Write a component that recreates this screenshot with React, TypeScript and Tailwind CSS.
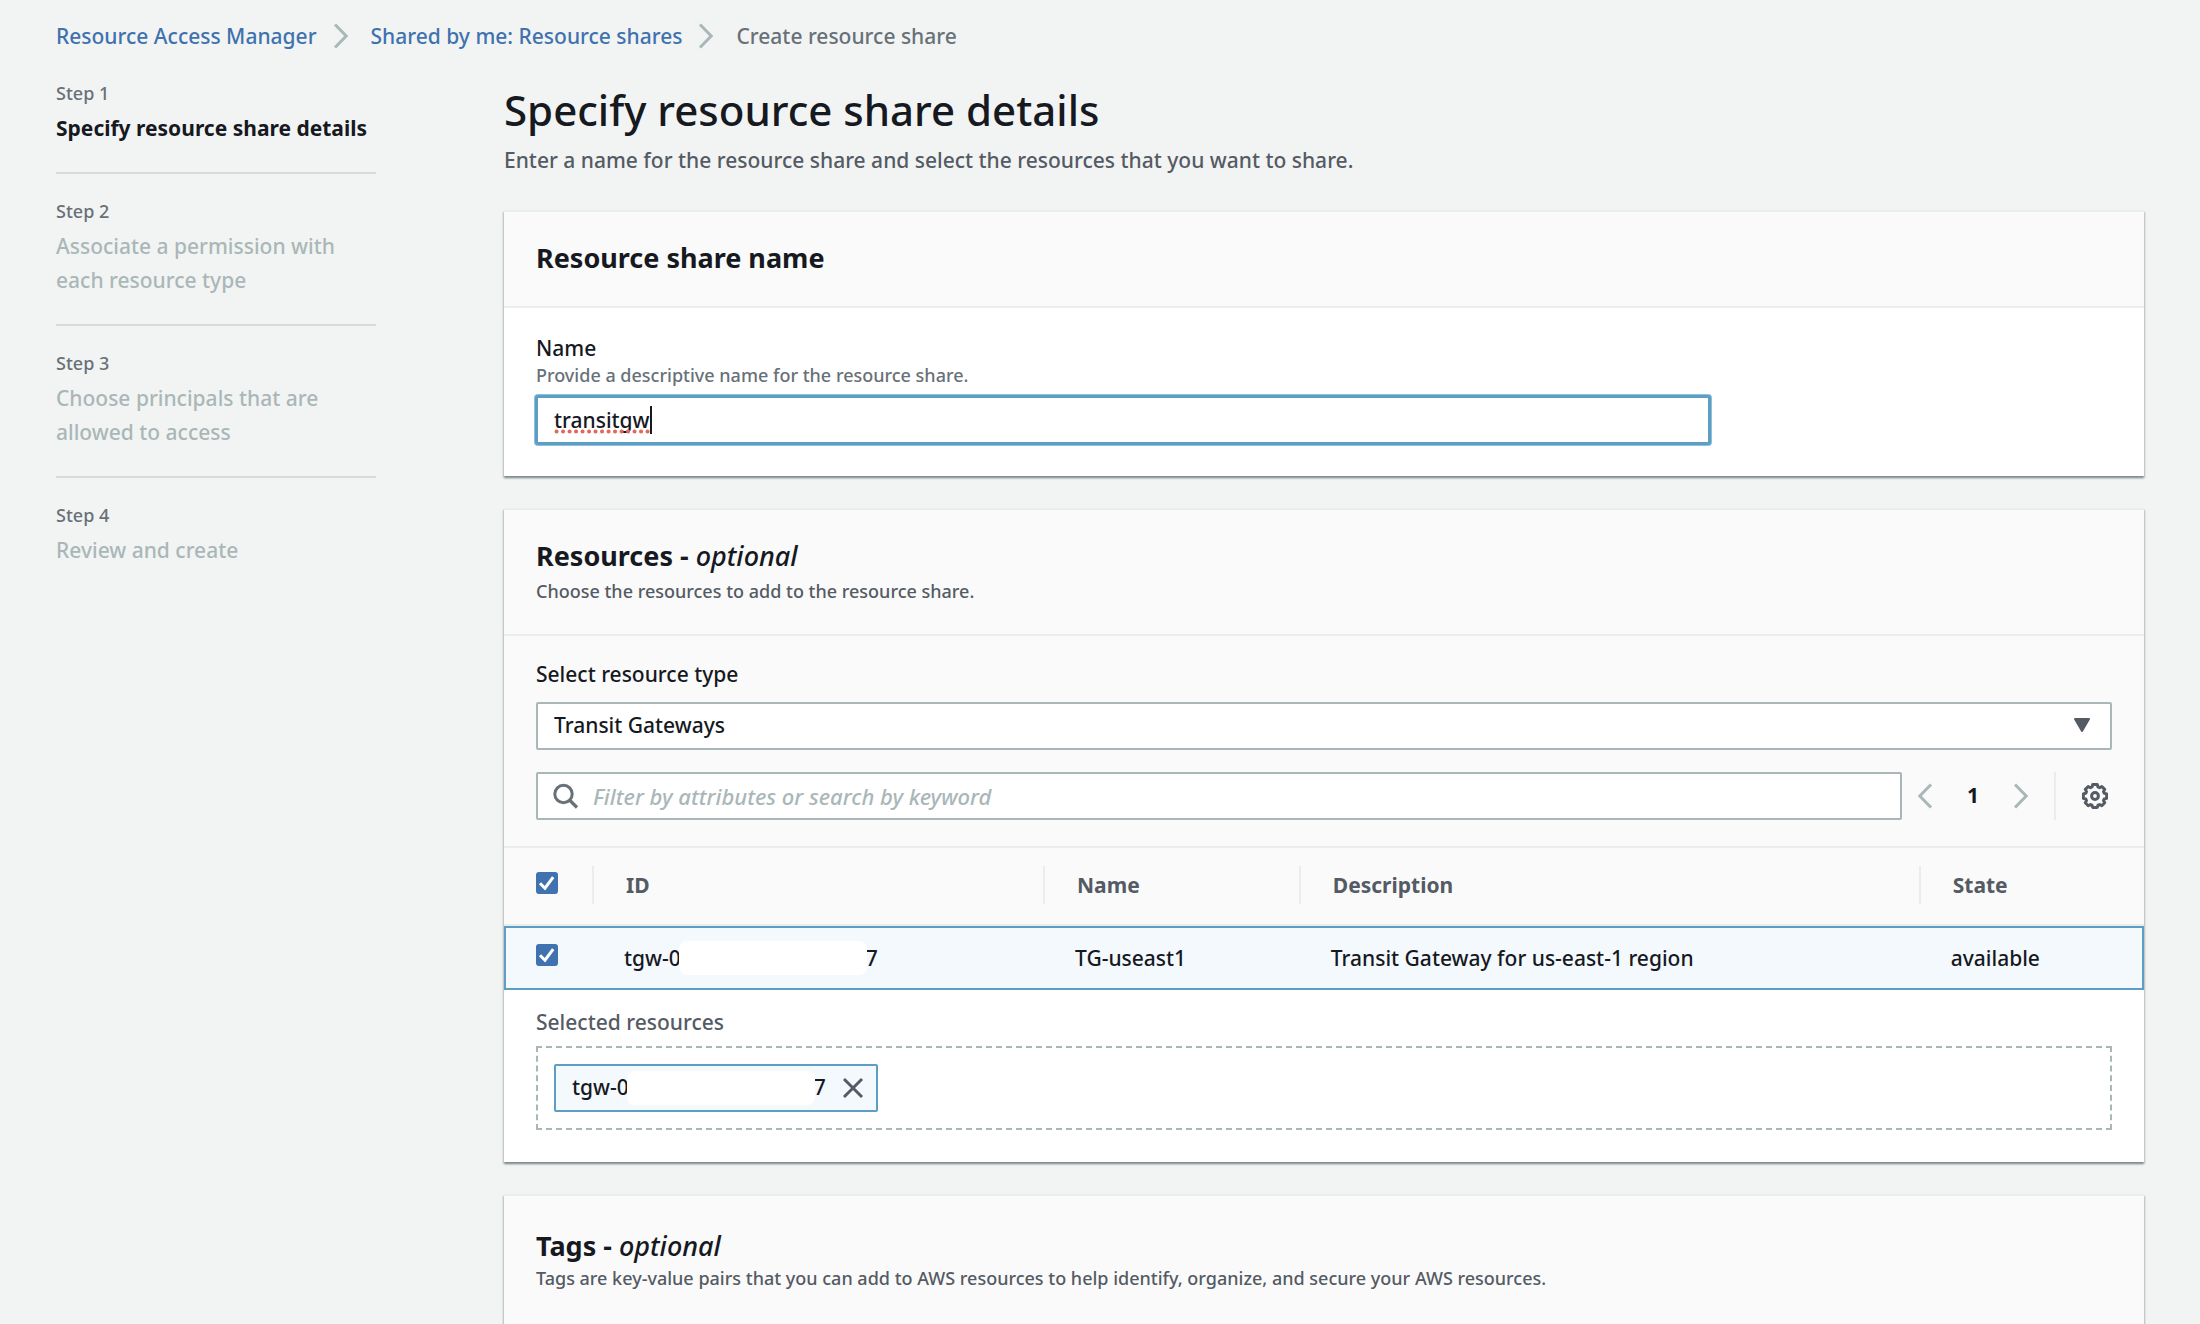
import { useState, type ReactNode } from "react"
import clsx from "clsx"

const steps = [
  "Specify resource share details",
  "Associate a permission with each resource type",
  "Choose principals that are allowed to access",
  "Review and create",
]

const gateways = [
  { id: ["tgw-0", "7"], name: "TG-useast1", description: "Transit Gateway for us-east-1 region", state: "available" },
]

function Chevron({ flip = false, className = "" }: { flip?: boolean; className?: string }) {
  return (
    <svg viewBox="0 0 16 26" className={clsx("h-[26px] w-4 shrink-0", flip && "rotate-180", className)} aria-hidden="true">
      <path d="M2 1.5 13.2 13 2 24.5" fill="none" stroke="#aab7b8" strokeWidth="3" />
    </svg>
  )
}

function SearchIcon() {
  return (
    <svg viewBox="0 0 26 26" className="h-[26px] w-[26px] shrink-0" aria-hidden="true">
      <circle cx="10.5" cy="11" r="8.7" fill="none" stroke="#687078" strokeWidth="3" />
      <path d="m16.5 17 7.5 7.5" stroke="#687078" strokeWidth="3.2" />
    </svg>
  )
}

function GearIcon() {
  return (
    <svg viewBox="0 0 26 26" className="h-[26px] w-[26px]" fill="none" stroke="#545b64" aria-hidden="true">
      <path
        d="M10.7 1.6h4.6l.7 2.4 1.6.7 2.2-1.2 2.9 2.9-1.2 2.2.7 1.6 2.4.7v4.4l-2.4.7-.7 1.6 1.2 2.2-2.9 2.9-2.2-1.2-1.6.7-.7 2.2h-4.6L10 22.2l-1.6-.7-2.2 1.2-2.9-2.9 1.2-2.2-.7-1.6-2.4-.7v-4.4l2.4-.7.7-1.6-1.2-2.2 2.9-2.9 2.2 1.2L10 4Z"
        strokeWidth="3"
        strokeLinejoin="round"
      />
      <circle cx="13" cy="13" r="3.4" strokeWidth="3" />
    </svg>
  )
}

function Checkbox({ label, className = "" }: { label: string; className?: string }) {
  const [checked, setChecked] = useState(true)

  return (
    <span className={clsx("relative block h-[22px] w-[22px]", className)}>
      <input
        type="checkbox"
        aria-label={label}
        checked={checked}
        onChange={e => setChecked(e.target.checked)}
        className="block h-full w-full appearance-none rounded-[3px] border-2 border-[#aab7b8] bg-white checked:border-[#3f72af] checked:bg-[#3f72af]"
      />
      {checked && (
        <svg viewBox="0 0 22 22" className="pointer-events-none absolute inset-0" aria-hidden="true">
          <path d="m4 11.2 5 5 8.2-11" fill="none" stroke="#fff" strokeWidth="3" />
        </svg>
      )}
    </span>
  )
}

// The middle of an ID is hidden behind a white patch
function MaskedId({ parts }: { parts: string[] }) {
  return (
    <span className="flex items-center">
      <span>{parts[0]}</span>
      <span className="z-10 -ml-0.5 h-[34px] w-[188px] rounded-lg bg-white" />
      <span className="-ml-px">{parts[1]}</span>
    </span>
  )
}

function Card({ title, optional, description, grow, children }: {
  title: string
  optional?: boolean
  description?: string
  grow?: boolean
  children?: ReactNode
}) {
  return (
    <section
      className={clsx(
        "border-t-2 border-[#eaeded] shadow-[0_2px_2px_0_rgba(0,28,36,0.3),1px_2px_2px_0_rgba(0,28,36,0.15),-1px_2px_2px_0_rgba(0,28,36,0.15)]",
        grow ? "grow bg-[#fafafa]" : "bg-white",
      )}
    >
      <header className={clsx("bg-[#fafafa] px-8", grow ? "pt-8" : "border-b-2 border-[#eaeded] pt-7 pb-[30px]")}>
        <h2 className="text-[27px] leading-9 font-bold">
          {title}
          {optional && <> - <i className="font-medium">optional</i></>}
        </h2>
        {description && (
          <p className={clsx("text-[18px] text-[#545b64]", grow ? "leading-7" : "mt-1 leading-[26px]")}>{description}</p>
        )}
      </header>
      {children}
    </section>
  )
}

export default function App() {
  const [name, setName] = useState("transitgw")

  return (
    <div className="flex min-h-screen flex-col bg-[#f2f4f3] px-14 pt-[19px] font-['Noto_Sans',sans-serif] text-[21px] font-medium text-[#16191f]">
      <nav aria-label="Breadcrumb" className="leading-[34px]">
        <ol className="flex items-center">
          <li><a href="#" className="text-[#3f72af]">Resource Access Manager</a></li>
          <li className="flex items-center">
            <Chevron className="mr-[22px] ml-4" />
            <a href="#" className="text-[#3f72af]">Shared by me: Resource shares</a>
          </li>
          <li className="flex items-center text-[#687078]">
            <Chevron className="mr-[22px] ml-4" />
            Create resource share
          </li>
        </ol>
      </nav>

      <div className="mt-[27px] flex grow gap-32">
        <ol className="w-80 shrink-0">
          {steps.map((step, i) => (
            <li
              key={step}
              className={clsx(i > 0 && "pt-6", i < steps.length - 1 && "border-b-2 border-[#d5dbdb] pb-[27px]")}
            >
              <p className="text-[18px] leading-[26px] text-[#687078]">Step {i + 1}</p>
              <p className={clsx("mt-[5px] leading-[34px]", i === 0 ? "font-bold whitespace-nowrap" : "pr-6 text-[#aab7b8]")}>{step}</p>
            </li>
          ))}
        </ol>

        <main className="flex min-w-0 grow flex-col gap-8">
          <div className="pb-px">
            <h1 className="mt-1 text-[42px] leading-[52px] font-medium">Specify resource share details</h1>
            <p className="mt-[7px] leading-[34px] text-[#545b64]">
              Enter a name for the resource share and select the resources that you want to share.
            </p>
          </div>

          <Card title="Resource share name">
            <div className="px-8 pt-[26px] pb-8">
              <label htmlFor="share-name" className="block leading-7">Name</label>
              <p id="share-name-hint" className="text-[18px] leading-[26px] text-[#687078]">
                Provide a descriptive name for the resource share.
              </p>
              <div className="relative mt-2 w-[calc(75%-8px)]">
                <input
                  id="share-name"
                  type="text"
                  aria-describedby="share-name-hint"
                  value={name}
                  onChange={e => setName(e.target.value)}
                  className="block h-12 w-full rounded-xs border-2 border-[#5c9ec4] bg-white px-4 shadow-[0_0_0_1px_#5c9ec4,0_0_0_2px_#8fc0d9] outline-none"
                />
                {/* spelling mark and text cursor */}
                <div className="pointer-events-none absolute top-2.5 left-[18px] flex h-7 items-end" aria-hidden="true">
                  <svg viewBox="0 0 96 5" className="h-[5px] w-24">
                    <path d="M2.5 2.5H96" stroke="#e0695c" strokeWidth="4" strokeLinecap="round" strokeDasharray="0.1 6.4" />
                  </svg>
                  <span className="h-7 w-0.5 bg-[#16191f]" />
                </div>
              </div>
            </div>
          </Card>

          <Card title="Resources" optional description="Choose the resources to add to the resource share.">
            <div className="bg-[#fafafa] px-8 pt-6 pb-[26px]">
              <label htmlFor="resource-type" className="block leading-7">Select resource type</label>
              <div className="relative mt-3.5">
                <select
                  id="resource-type"
                  className="block h-12 w-full appearance-none rounded-xs border-2 border-[#aab7b8] bg-white px-4"
                >
                  <option>Transit Gateways</option>
                </select>
                <svg viewBox="0 0 16 14" className="pointer-events-none absolute top-4 right-[22px] h-3.5 w-4" aria-hidden="true">
                  <path d="M1 1h14L8 13Z" fill="#545b64" stroke="#545b64" strokeWidth="2" strokeLinejoin="round" />
                </svg>
              </div>

              <div className="mt-[22px] flex h-12 items-center">
                <div className="flex h-12 grow items-center gap-3.5 rounded-xs border-2 border-[#aab7b8] bg-white px-[15px]">
                  <SearchIcon />
                  <input
                    type="search"
                    aria-label="Filter resources"
                    placeholder="Filter by attributes or search by keyword"
                    className="h-full grow text-[22px] outline-none placeholder:text-[#aab7b8] placeholder:italic"
                  />
                </div>
                <button type="button" aria-label="Previous page" className="ml-[15px]"><Chevron flip /></button>
                <span className="w-20 text-center font-bold">1</span>
                <button type="button" aria-label="Next page"><Chevron /></button>
                <span className="ml-[25px] h-12 w-0.5 bg-[#eaeded]" />
                <button type="button" aria-label="Preferences" className="mr-1 ml-[26px]"><GearIcon /></button>
              </div>
            </div>

            <table className="w-full table-fixed border-separate border-spacing-0 border-t-2 border-[#eaeded] text-left">
              <colgroup>
                <col className="w-[90px]" />
                <col className="w-[27.5%]" />
                <col className="w-[15.6%]" />
                <col className="w-[37.8%]" />
                <col />
              </colgroup>
              <thead className="bg-[#fafafa] text-[#545b64]">
                <tr>
                  {["", "ID", "Name", "Description", "State"].map((heading, i) => (
                    <th key={i} scope="col" className="border-b-2 border-[#eaeded] pt-[18px] pb-5 pl-8 font-bold">
                      <div className="flex h-[38px] items-center justify-between leading-[34px]">
                        {heading || <Checkbox label="Select all" className="-mt-1" />}
                        {i < 4 && <span className="h-[38px] w-0.5 bg-[#eaeded]" />}
                      </div>
                    </th>
                  ))}
                </tr>
              </thead>
              <tbody>
                {gateways.map(gateway => (
                  <tr
                    key={gateway.name}
                    className="bg-[#f4f9fe] leading-[34px] *:border-y-2 *:border-[#5c9ec4] *:py-[13px] *:pl-[30px] *:first:border-l-2 *:last:border-r-2"
                  >
                    <td><Checkbox label={`Select ${gateway.name}`} className="-mt-1.5" /></td>
                    <td><MaskedId parts={gateway.id} /></td>
                    <td>{gateway.name}</td>
                    <td>{gateway.description}</td>
                    <td>{gateway.state}</td>
                  </tr>
                ))}
              </tbody>
            </table>

            <div className="px-8 pt-[18px] pb-8">
              <p className="leading-7 text-[#545b64]">Selected resources</p>
              <ul className="mt-2.5 flex border-2 border-dashed border-[#aab7b8] p-4">
                {gateways.map(gateway => (
                  <li
                    key={gateway.name}
                    className="flex h-12 items-center rounded-xs border-2 border-[#5c9ec4] bg-[#f4f9fe] pr-3 pl-4"
                  >
                    <MaskedId parts={gateway.id} />
                    <button type="button" aria-label={`Remove ${gateway.name}`} className="ml-4">
                      <svg viewBox="0 0 22 22" className="h-[22px] w-[22px]" aria-hidden="true">
                        <path d="m2 2 18 18M20 2 2 20" stroke="#545b64" strokeWidth="3" />
                      </svg>
                    </button>
                  </li>
                ))}
              </ul>
            </div>
          </Card>

          <Card
            title="Tags"
            optional
            grow
            description="Tags are key-value pairs that you can add to AWS resources to help identify, organize, and secure your AWS resources."
          />
        </main>
      </div>
    </div>
  )
}
